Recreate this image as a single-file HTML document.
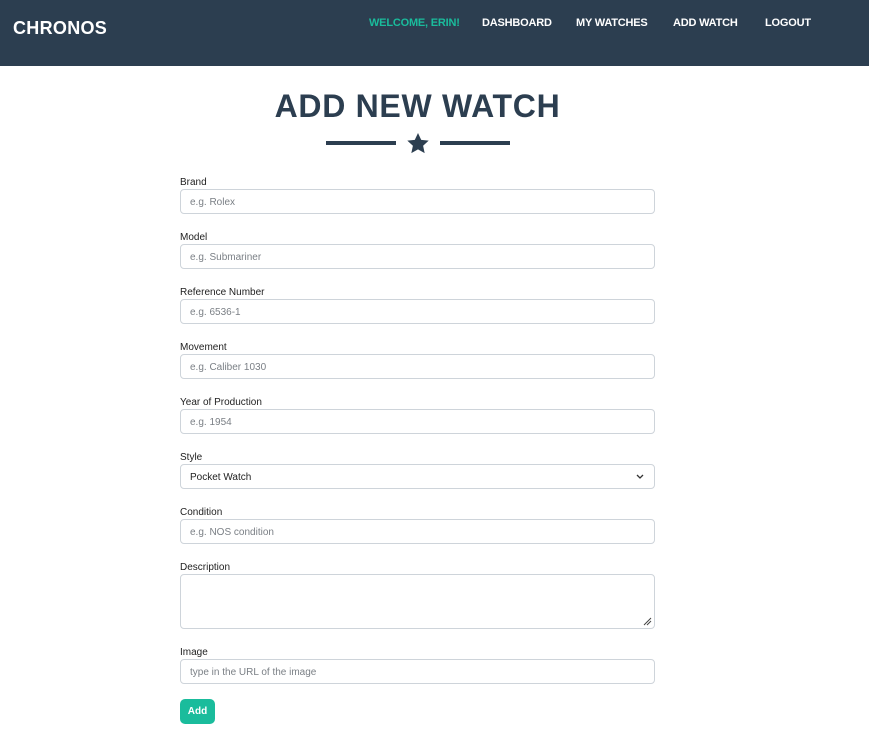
<!DOCTYPE html>
<html><head><style>
*{box-sizing:border-box;margin:0;padding:0}
body{width:869px;height:736px;background:#fff;font-family:"Liberation Sans",sans-serif;position:relative;overflow:hidden}
.nav{position:absolute;left:0;top:0;width:869px;height:66px;background:#2c3e50}
.brand{position:absolute;left:13px;top:18px;color:#fff;font-weight:bold;font-size:18px;letter-spacing:0.3px}
.nl{position:absolute;top:17px;color:#fff;font-weight:bold;font-size:11px;letter-spacing:-0.2px}
h1{position:absolute;left:0;width:835px;text-align:center;top:88px;font-size:32px;font-weight:bold;color:#2c3e50;letter-spacing:0.7px}
.ln{position:absolute;top:141px;height:4px;width:70px;background:#2c3e50}
.lab{position:absolute;left:180px;font-size:10px;color:#222}
.in{position:absolute;left:180px;width:475px;height:25px;border:1px solid #ced4da;border-radius:4px;font-size:10px;color:#7a7f85;padding:7px 9px 0}
.btn{position:absolute;left:180px;top:699px;width:35px;height:25px;background:#1abc9c;border-radius:5px;color:#fff;font-weight:bold;font-size:10px;text-align:center;line-height:26px}
</style></head><body>
<div class="nav">
<div class="brand">CHRONOS</div>
<div class="nl" style="left:369px;color:#1abc9c">WELCOME, ERIN!</div>
<div class="nl" style="left:482px">DASHBOARD</div>
<div class="nl" style="left:576px">MY WATCHES</div>
<div class="nl" style="left:673px">ADD WATCH</div>
<div class="nl" style="left:765px">LOGOUT</div>
</div>
<h1>ADD NEW WATCH</h1>
<div class="ln" style="left:326px"></div>
<div class="ln" style="left:440px"></div>
<svg style="position:absolute;left:407px;top:133px" width="22" height="21" viewBox="0 0 24 23"><path d="M12 0l3.5 7.5 8.2.9-6.1 5.6 1.7 8.1L12 18l-7.3 4.1 1.7-8.1L.3 8.4l8.2-.9z" fill="#2c3e50"/></svg>
<div class="lab" style="top:177px">Brand</div><div class="in" style="top:189px">e.g. Rolex</div>
<div class="lab" style="top:232px">Model</div><div class="in" style="top:244px">e.g. Submariner</div>
<div class="lab" style="top:287px">Reference Number</div><div class="in" style="top:299px">e.g. 6536-1</div>
<div class="lab" style="top:342px">Movement</div><div class="in" style="top:354px">e.g. Caliber 1030</div>
<div class="lab" style="top:397px">Year of Production</div><div class="in" style="top:409px">e.g. 1954</div>
<div class="lab" style="top:452px">Style</div><div class="in" style="top:464px;color:#222">Pocket Watch<svg style="position:absolute;right:10px;top:9px" width="8" height="6" viewBox="0 0 8 6"><path d="M1 1l3 3 3-3" stroke="#333" stroke-width="1.3" fill="none"/></svg></div>
<div class="lab" style="top:507px">Condition</div><div class="in" style="top:519px">e.g. NOS condition</div>
<div class="lab" style="top:562px">Description</div><div class="in" style="top:574px;height:55px"><svg style="position:absolute;right:2px;bottom:2px" width="10" height="10"><path d="M2 9L9 2M5 9L9 5" stroke="#444" stroke-width="1"/></svg></div>
<div class="lab" style="top:647px">Image</div><div class="in" style="top:659px">type in the URL of the image</div>
<div class="btn">Add</div>
</body></html>
